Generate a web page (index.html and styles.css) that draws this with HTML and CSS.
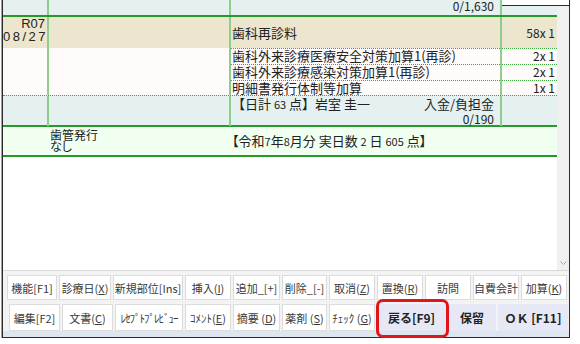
FILE: index.html
```html
<!DOCTYPE html>
<html lang="ja">
<head>
    <meta charset="UTF-8">
    <meta name="viewport" content="width=device-width, initial-scale=1.0">
    <title>診療行為入力</title>
    <link rel="stylesheet" href="styles.css">
</head>
<body>
    <div class="frame">
        <div class="view">
            <div class="sheet">
                <!-- 前日の残り -->
                <div class="row top">
                    <div class="cell"></div>
                    <div class="cell"></div>
                    <div class="cell num">0/1,630</div>
                    <div class="cell cut"></div>
                </div>

                <!-- 来院日 -->
                <div class="row visit">
                    <div class="cell date">R07<br><span class="md">08/27</span></div>
                    <div class="cell"></div>
                    <div class="cell act">歯科再診料</div>
                    <div class="cell num mid">58x 1</div>
                </div>

                <div class="row items">
                    <div class="cell"></div>
                    <div class="cell"></div>
                    <div class="cell">
                        <div class="line">歯科外来診療医療安全対策加算1(再診)</div>
                        <div class="line">歯科外来診療感染対策加算1(再診)</div>
                        <div class="line">明細書発行体制等加算</div>
                    </div>
                    <div class="cell">
                        <div class="line num">2x 1</div>
                        <div class="line num">2x 1</div>
                        <div class="line num">1x 1</div>
                    </div>
                </div>

                <!-- 日計 -->
                <div class="row total">
                    <div class="cell"></div>
                    <div class="cell"></div>
                    <div class="cell">
                        <div class="sum">
                            <span>【日計 <span class="n">63</span> 点】岩室 圭一</span>
                            <span>入金/負担金</span>
                        </div>
                        <div class="num paid">0/190</div>
                    </div>
                    <div class="cell"></div>
                </div>

                <!-- 月計 -->
                <div class="row month">
                    <div class="cell"></div>
                    <div class="cell note">歯管発行<br>なし</div>
                    <div class="cell act">【令和<span class="n">7</span>年<span class="n">8</span>月分 実日数 <span class="n">2</span> 日 <span class="n">605</span> 点】</div>
                    <div class="cell"></div>
                </div>
            </div>
            <div class="scroll">
                <svg width="7" height="4" viewBox="0 0 7 4"><polyline points="0.5,0.5 3.5,3.5 6.5,0.5" fill="none" stroke="#a8a8a8"/></svg>
            </div>
        </div>

        <div class="keys">
            <div class="keyrow first">
                <button class="key">機能[F1]</button>
                <button class="key">診療日(<u>X</u>)</button>
                <button class="key">新規部位[Ins]</button>
                <button class="key">挿入(<u>I</u>)</button>
                <button class="key">追加_[+]</button>
                <button class="key">削除_[-]</button>
                <button class="key">取消(<u>Z</u>)</button>
                <button class="key">置換(<u>R</u>)</button>
                <button class="key">訪問</button>
                <button class="key">自費会計</button>
                <button class="key">加算(<u>K</u>)</button>
            </div>
            <div class="keyrow second">
                <button class="key">編集[F2]</button>
                <button class="key">文書(<u>C</u>)</button>
                <button class="key kana">ﾚｾﾌﾟﾄﾌﾟﾚﾋﾞｭｰ</button>
                <button class="key">ｺﾒﾝﾄ(<u>E</u>)</button>
                <button class="key">摘要 (<u>D</u>)</button>
                <button class="key">薬剤 (<u>S</u>)</button>
                <button class="key">ﾁｪｯｸ (<u>G</u>)</button>
                <button class="key big marked">戻る[F9]</button>
                <button class="key big">保留</button>
                <button class="key big">ＯＫ [F11]</button>
            </div>
        </div>
    </div>
</body>
</html>
```

FILE: styles.css
```css
* {
    margin: 0;
    padding: 0;
    box-sizing: border-box;
    font-family: "Noto Sans CJK JP", sans-serif;
}

body {
    background-color: #fff;
    color: #222;
}

.frame {
    width: 568px;
    height: 338px;
    margin-left: 2px;
    border: 1px solid #2b2b2b;
    border-top: none;
    box-shadow: -1px 0 0 #a0a0a0;
    display: flex;
    flex-direction: column;
}

.view {
    height: 270px;
    display: flex;
}

.sheet {
    width: 554px;
    font-size: 13px;
}

.scroll {
    width: 12px;
    background: linear-gradient(#fff 0 5px, #2b2b2b 5px 6px, #f0f0f0 6px);
    display: flex;
    align-items: flex-end;
    justify-content: center;
    padding-bottom: 5px;
}

/* 明細の行 */
.row {
    display: grid;
    grid-template-columns: 46px 182px 271px 55px;
}

.row .cell {
    border-right: 2px solid #8fcd8f;
}

.row .cell:last-child {
    border-right: none;
}

.num {
    font-size: 12px;
    text-align: right;
    padding-right: 6px;
}

.n {
    font-size: 11px;
}

.top {
    height: 17px;
    background-color: #e5f1f1;
    border-bottom: 2px solid #27992a;
}

.top .num {
    line-height: 12px;
}

.top .cut {
    background: linear-gradient(#fff 0 5px, #2b2b2b 5px 6px, #e5f1f1 6px);
}

.visit {
    height: 31px;
    background-color: #ede6cf;
}

.date {
    font-family: "Liberation Sans", sans-serif;
    text-align: right;
    padding-right: 2px;
    line-height: 13px;
    font-size: 13px;
}

.date .md {
    font-family: inherit;
    letter-spacing: 2.5px;
    margin-right: -2.5px;
}

.act {
    line-height: 31px;
    padding-left: 1px;
}

.visit .mid {
    line-height: 31px;
    padding-right: 2px;
}

.items {
    height: 47px;
    background-color: #fffbfb;
}

.line {
    height: 16px;
    border-top: 1px dotted #3aa83a;
    line-height: 14px;
    padding-left: 1px;
    white-space: nowrap;
}

.line:last-child {
    height: 15px;
}

.items .line.num {
    padding-right: 2px;
}

.total {
    height: 32px;
    background-color: #e5f1f1;
    border-top: 1px dotted #3aa83a;
    border-bottom: 2px solid #27992a;
}

.total .cell {
    padding-top: 1px;
    line-height: 14px;
}

.sum {
    display: flex;
    justify-content: space-between;
    padding: 0 6px 0 1px;
}

.paid {
    padding-top: 1px;
}

.month {
    height: 30px;
    background-color: #f0fff0;
    border-bottom: 2px solid #27992a;
    font-feature-settings: "palt";
}

.row.month .cell {
    border-right: none;
}

.note {
    font-size: 12px;
    line-height: 11px;
    padding: 2px 0 0 1px;
}

.month .act {
    line-height: 28px;
}

/* ファンクションキー */
.keys {
    flex: 1;
    background-color: #f3f3f3;
    border-top: 1px solid #dadada;
    border-bottom: 6px solid #dde5ef;
    padding-top: 4px;
    display: flex;
    flex-direction: column;
    gap: 4px;
}

.keyrow {
    display: grid;
    gap: 2px;
}

.keyrow.first {
    height: 25px;
    padding-left: 4px;
    grid-template-columns: 50px 52px 70px 46px 47px 45px 46px 46px 46px 46px 46px;
}

.keyrow.second {
    height: 27px;
    padding-left: 6px;
    grid-template-columns: 51px 51px 68px 46px 47px 45px 46px 69px 48px 70px;
}

.key {
    background-color: #fff;
    border: 1px solid #dcdcdc;
    font-size: 11px;
    color: #3a3a3a;
    white-space: nowrap;
    overflow: hidden;
}

.key.kana {
    letter-spacing: -1px;
}

.key.big {
    background-color: #e6e9f5;
    border-color: #e6e9f5;
    font-size: 12px;
    font-weight: bold;
    color: #222;
}

.key.marked {
    position: relative;
    overflow: visible;
}

.key.marked::after {
    content: "";
    position: absolute;
    top: -6px;
    bottom: -8px;
    left: -2px;
    right: -4px;
    border: 3px solid #e0161b;
    border-radius: 7px;
}
```
